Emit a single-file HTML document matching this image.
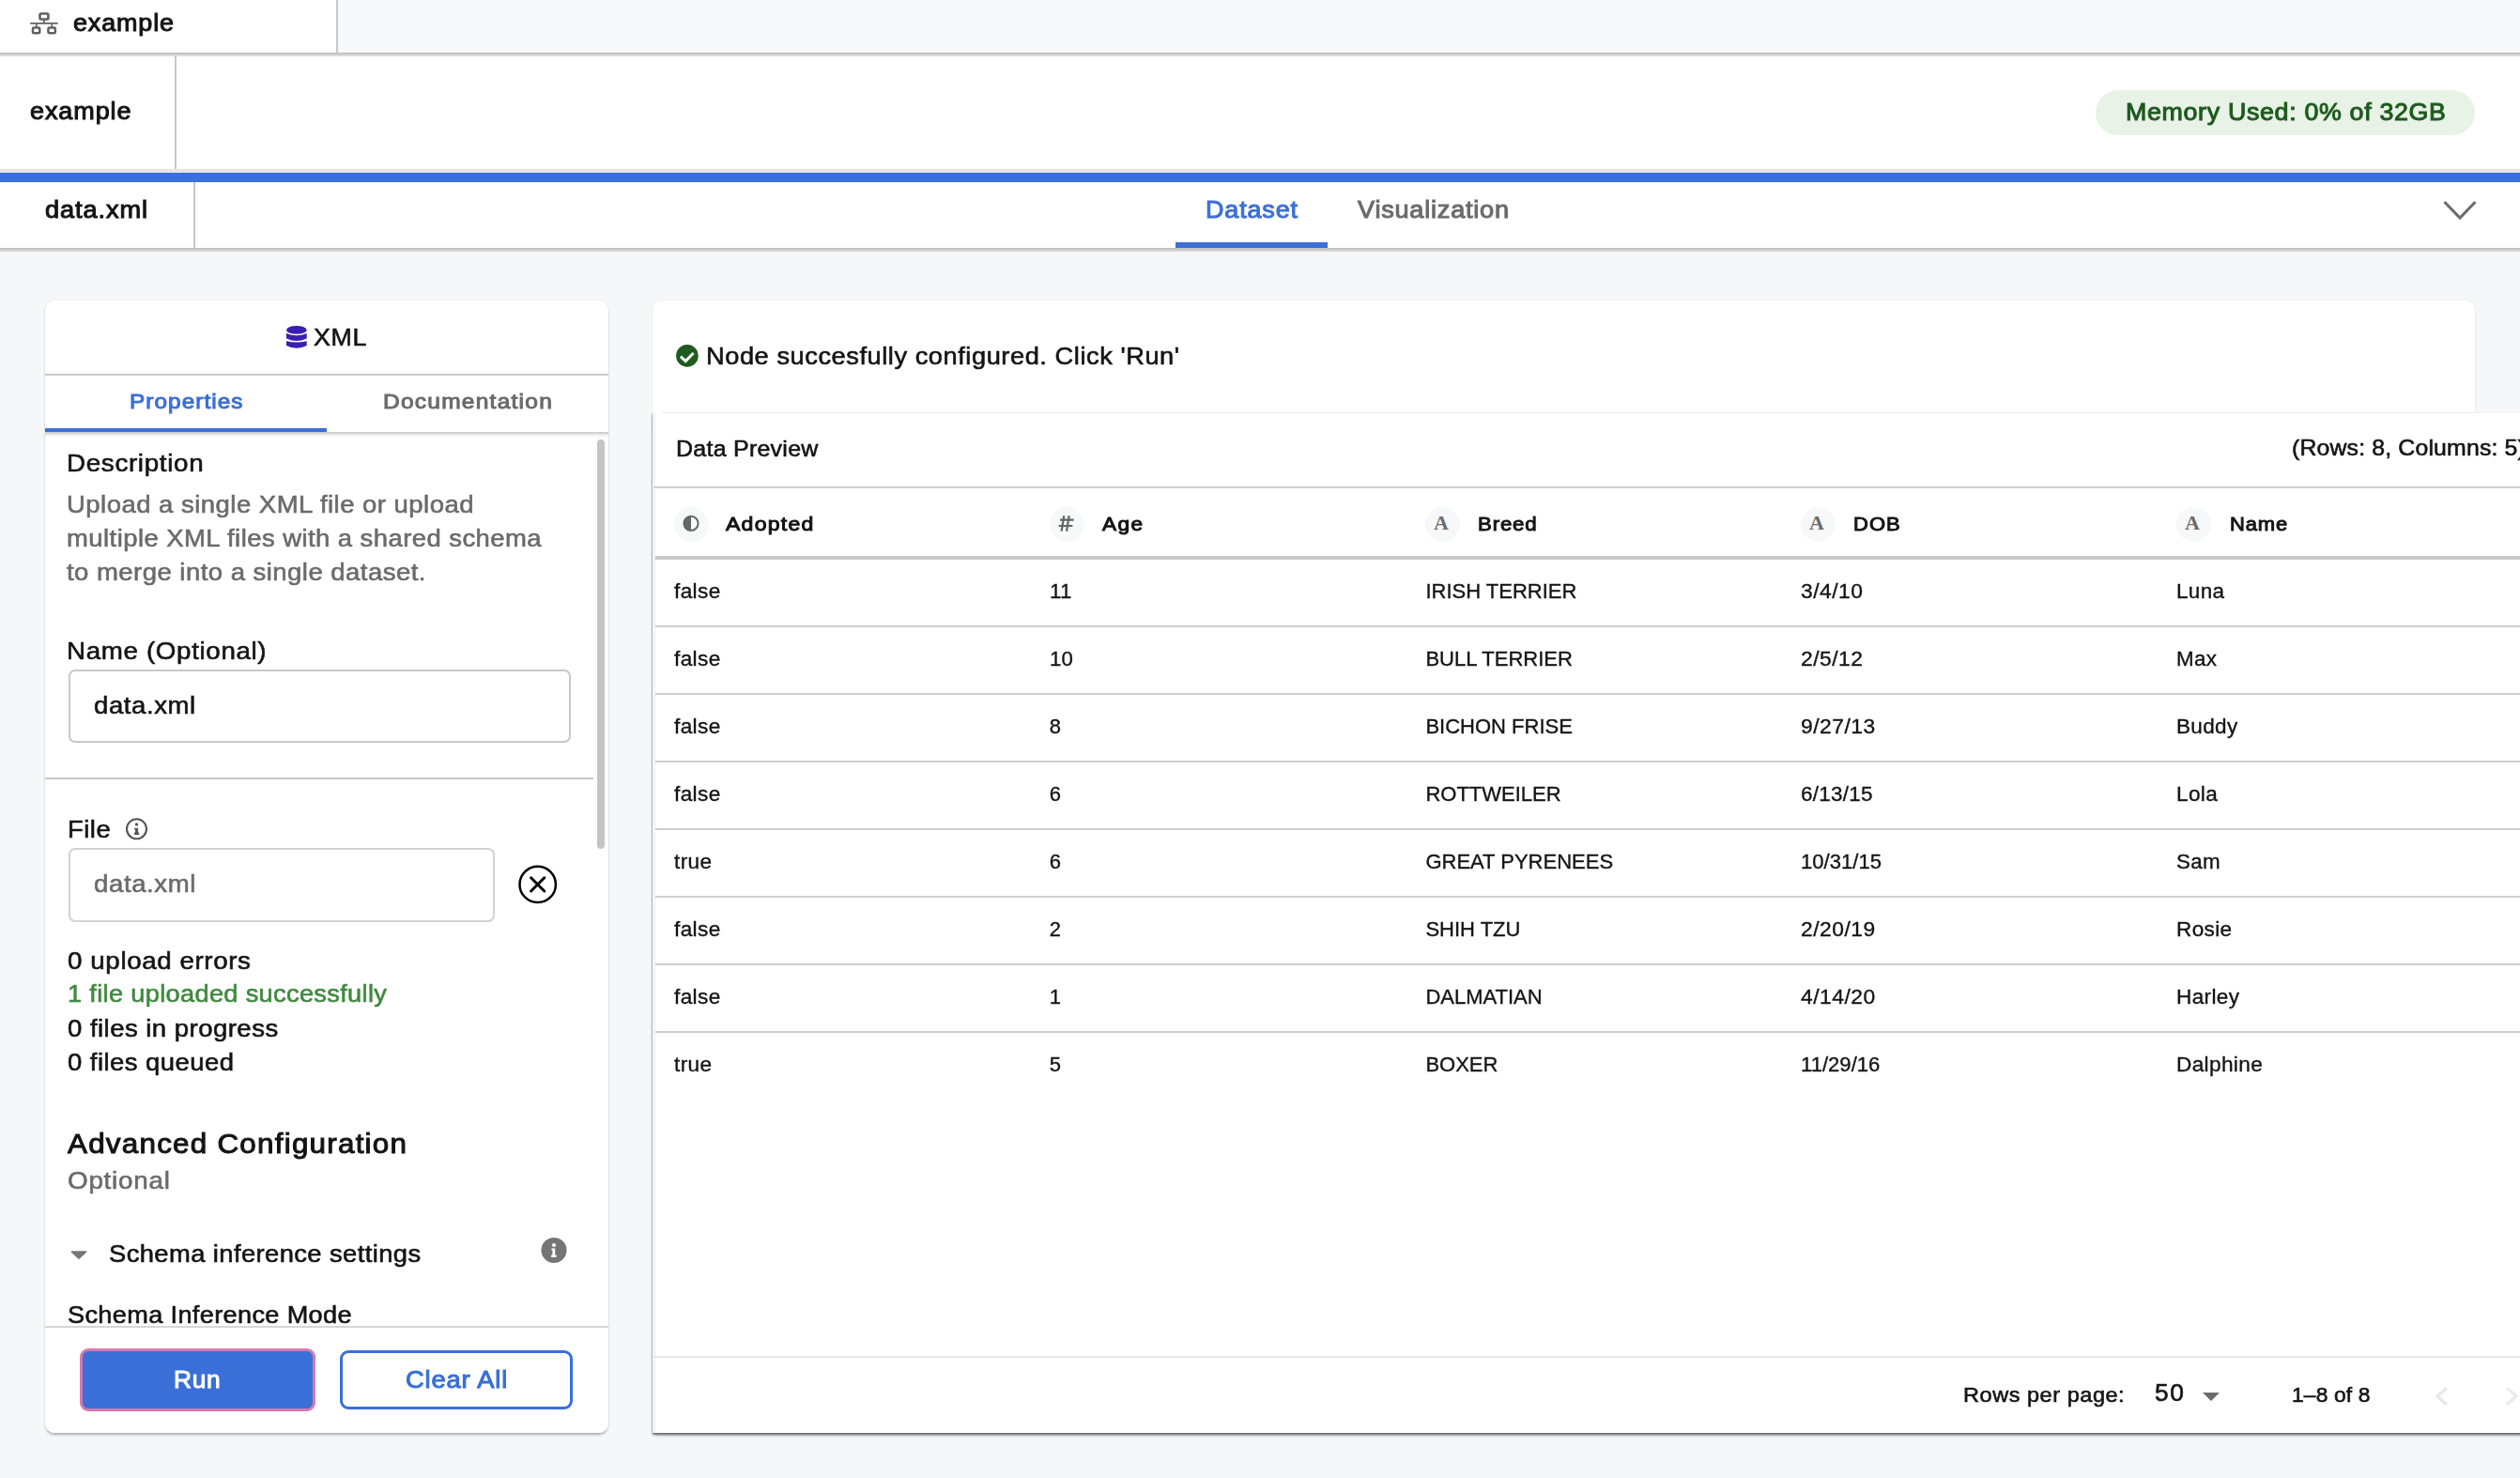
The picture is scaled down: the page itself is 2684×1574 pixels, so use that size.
<!DOCTYPE html>
<html><head><meta charset="utf-8">
<style>
html,body{margin:0;padding:0;}
body{width:2684px;height:1574px;position:relative;overflow:hidden;background:#f6f7f9;font-family:"Liberation Sans", sans-serif;}
.a{position:absolute;box-sizing:border-box;}
.t{position:absolute;white-space:pre;}
svg{position:absolute;overflow:visible;}
</style></head><body>
<!-- top bar -->
<div class="a" style="left:0;top:0;width:2684px;height:56px;background:#f7f8fa;"></div>
<div class="a" style="left:0;top:0;width:358px;height:56px;background:#fff;"></div>
<div class="a" style="left:358px;top:0;width:2px;height:56px;background:#c8c8c8;"></div>
<div class="a" style="left:0;top:56px;width:2684px;height:2px;background:#c2c2c2;"></div>
<div class="a" style="left:0;top:58px;width:2684px;height:2px;background:#dcdcdc;"></div>
<!-- row 2 -->
<div class="a" style="left:0;top:60px;width:2684px;height:120px;background:#fff;"></div>
<div class="a" style="left:186px;top:60px;width:2px;height:120px;background:#c8c8c8;"></div>
<div class="a" style="left:0;top:180px;width:2684px;height:4px;background:#e4e4e4;"></div>
<div class="a" style="left:2232px;top:96px;width:404px;height:48px;border-radius:24px;background:#e8f2e6;"></div>
<!-- blue bar -->
<div class="a" style="left:0;top:184px;width:2684px;height:10px;background:#3870dc;"></div>
<!-- row 3 -->
<div class="a" style="left:0;top:194px;width:2684px;height:70px;background:#fff;"></div>
<div class="a" style="left:206px;top:194px;width:2px;height:70px;background:#c8c8c8;"></div>
<div class="a" style="left:1252px;top:258px;width:162px;height:6px;background:#3b70d6;"></div>
<div class="a" style="left:0;top:264px;width:2684px;height:2px;background:#c2c2c2;"></div>
<div class="a" style="left:0;top:266px;width:2684px;height:2px;background:#d6d6d7;"></div>
<svg style="left:2600px;top:210px" width="40" height="28" viewBox="0 0 40 28"><path d="M3.5 5 L20 22 L36.5 5" fill="none" stroke="#6b6b6b" stroke-width="3"/></svg>
<!-- sitemap icon -->
<svg style="left:32px;top:13px" width="30" height="25" viewBox="0 0 30 25">
<rect x="10.5" y="1.5" width="8.9" height="6" fill="none" stroke="#616161" stroke-width="2.6" rx="1.2"/>
<rect x="14.1" y="8.6" width="1.8" height="2.8" fill="#616161"/>
<rect x="0" y="11.1" width="29.8" height="1.7" rx="0.8" fill="#616161"/>
<rect x="5.9" y="12.5" width="1.8" height="3" fill="#616161"/>
<rect x="22.4" y="12.5" width="1.6" height="3" fill="#616161"/>
<rect x="2.95" y="16.45" width="7.3" height="5.9" fill="none" stroke="#616161" stroke-width="2.5" rx="1.2"/>
<rect x="19.45" y="16.45" width="7.4" height="5.9" fill="none" stroke="#616161" stroke-width="2.5" rx="1.2"/>
</svg>

<!-- LEFT CARD -->
<div class="a" style="left:48px;top:320px;width:600px;height:1206px;background:#fff;border-radius:10px;box-shadow:0 3px 3px -1px rgba(0,0,0,0.3),0 0 2px rgba(0,0,0,0.12);"></div>
<svg style="left:305px;top:347px" width="22" height="25" viewBox="0 0 22 25">
<ellipse cx="10.85" cy="4.4" rx="10.85" ry="4.4" fill="#3a1fb0"/>
<path d="M0 8 Q10.85 12.6 21.7 8 L21.7 13.4 Q10.85 18.4 0 13.4 Z" fill="#3a1fb0"/>
<path d="M0 16.3 Q10.85 18.9 21.7 16.3 L21.7 20.9 Q10.85 26.7 0 20.9 Z" fill="#3a1fb0"/>
</svg>
<div class="a" style="left:48px;top:398px;width:600px;height:2px;background:#c8c8c8;"></div>
<div class="a" style="left:48px;top:456px;width:300px;height:4px;background:#3b70d6;"></div>
<div class="a" style="left:48px;top:460px;width:600px;height:2px;background:#d0d0d0;"></div>
<div class="a" style="left:48px;top:462px;width:600px;height:3px;background:linear-gradient(#e6e6e6,#fafafa);"></div>
<div class="a" style="left:636px;top:468px;width:8px;height:436px;border-radius:4px;background:#c4c4c4;"></div>
<div class="a" style="left:72.5px;top:713px;width:535px;height:78px;border:2px solid #c8c8c8;border-radius:7px;"></div>
<div class="a" style="left:48px;top:828px;width:584px;height:2px;background:#c8c8c8;"></div>
<svg style="left:133px;top:871px" width="26" height="24" viewBox="0 0 26 24">
<circle cx="12.5" cy="11.8" r="10.5" fill="none" stroke="#555" stroke-width="2.1"/>
<rect x="11" y="5.6" width="3.1" height="3" rx="0.8" fill="#555"/>
<path d="M10.2 10.8 H14.1 V15.6 H15.2 V17.9 H10 V15.6 H11.1 V12.6 H10.2 Z" fill="#555"/>
</svg>
<div class="a" style="left:73px;top:903px;width:454px;height:78.5px;border:2px solid #d2d2d2;border-radius:7px;"></div>
<svg style="left:551px;top:920px" width="44" height="44" viewBox="0 0 44 44">
<circle cx="21.7" cy="21.9" r="19.2" fill="none" stroke="#000" stroke-width="2.5"/>
<path d="M14.6 14.8 L28.8 29 M28.8 14.8 L14.6 29" stroke="#000" stroke-width="3" stroke-linecap="round"/>
</svg>
<svg style="left:74px;top:1330px" width="20" height="13" viewBox="0 0 20 13"><path d="M2.2 2.2 H17.8 Q19 2.4 18.2 3.4 L10.8 10.6 Q10 11.3 9.2 10.6 L1.8 3.4 Q1 2.4 2.2 2.2 Z" fill="#777"/></svg>
<svg style="left:576px;top:1317px" width="28" height="28" viewBox="0 0 28 28">
<circle cx="14" cy="14.4" r="13.5" fill="#757575"/>
<circle cx="14" cy="9" r="2.1" fill="#fff"/>
<path d="M11.4 12.4 H15.2 V19.6 H16.6 V22 H11 V19.6 H12.4 V14.2 H11.4 Z" fill="#fff"/>
</svg>
<div class="a" style="left:48px;top:1412px;width:600px;height:114px;background:#fff;border-radius:0 0 10px 10px;"></div>
<div class="a" style="left:48px;top:1412px;width:600px;height:2px;background:#d6d6d6;"></div>
<div class="a" style="left:84.5px;top:1436.4px;width:251px;height:67px;background:#3a6fd8;border:3px solid #d77aae;border-radius:9px;"></div>
<div class="a" style="left:362px;top:1438.4px;width:247.6px;height:63px;background:#fff;border:3.5px solid #3a6fd8;border-radius:9px;"></div>

<!-- RIGHT CARD -->
<div class="a" style="left:695px;top:320px;width:1941px;height:140px;background:#fff;border-radius:10px 10px 0 0;box-shadow:0 0 2px rgba(0,0,0,0.12);"></div>
<div class="a" style="left:695px;top:440px;width:2000px;height:1086px;background:#fff;box-shadow:0 2px 2px 0 rgba(0,0,0,0.45),0 4px 4px -2px rgba(0,0,0,0.3),-1.5px 0 1px rgba(0,0,0,0.28);"></div>
<div class="a" style="left:695px;top:320px;width:1941px;height:140px;background:#fff;border-radius:10px 10px 0 0;"></div>
<div class="a" style="left:704px;top:439px;width:1932px;height:1px;background:#f0f0f0;"></div>
<div class="a" style="left:696px;top:440px;width:2px;height:1086px;background:#eff0f0;"></div>
<svg style="left:720px;top:367px" width="24" height="24" viewBox="0 0 24 24">
<circle cx="11.9" cy="11.9" r="11.8" fill="#1f5a1f"/>
<path d="M4.9 12.6 L10.2 17.6 L18.6 8.9" fill="none" stroke="#fff" stroke-width="2.9"/>
</svg>
<div class="a" style="left:696px;top:518px;width:1988px;height:2px;background:#d0d0d0;"></div>
<div class="a" style="left:698px;top:592px;width:1986px;height:4px;background:#c8c8c8;"></div>
<div class="a" style="left:717.5px;top:539.5px;width:37px;height:37px;border-radius:50%;background:#f7f8f9;"></div>
<div class="a" style="left:1117.5px;top:539.5px;width:37px;height:37px;border-radius:50%;background:#f7f8f9;"></div>
<div class="a" style="left:1517.5px;top:539.5px;width:37px;height:37px;border-radius:50%;background:#f7f8f9;"></div>
<div class="a" style="left:1917.5px;top:539.5px;width:37px;height:37px;border-radius:50%;background:#f7f8f9;"></div>
<div class="a" style="left:2317.5px;top:539.5px;width:37px;height:37px;border-radius:50%;background:#f7f8f9;"></div>
<svg style="left:726px;top:548px" width="20" height="20" viewBox="0 0 20 20"><circle cx="10" cy="9.3" r="7.6" fill="none" stroke="#666" stroke-width="2"/><path d="M10 1.7 A7.6 7.6 0 0 0 10 16.9 Z" fill="#666"/></svg>
<svg style="left:1126px;top:548px" width="20" height="20" viewBox="0 0 20 20"><path d="M7.3 1.2 L4.6 17.7 M12.7 1.2 L10 17.7 M3 5.7 H17.6 M1.6 12 H16.4" fill="none" stroke="#666" stroke-width="2.2"/></svg>
<div class="t" style="left:1527px;top:546.377px;font-family:'Liberation Serif',serif;font-weight:700;font-size:22px;line-height:22px;color:#6b6b6b;">A</div>
<div class="t" style="left:1927px;top:546.377px;font-family:'Liberation Serif',serif;font-weight:700;font-size:22px;line-height:22px;color:#6b6b6b;">A</div>
<div class="t" style="left:2327px;top:546.377px;font-family:'Liberation Serif',serif;font-weight:700;font-size:22px;line-height:22px;color:#6b6b6b;">A</div>
<div class="a" style="left:698px;top:666px;width:1986px;height:2px;background:#cfcfcf;"></div>
<div class="a" style="left:698px;top:738px;width:1986px;height:2px;background:#cfcfcf;"></div>
<div class="a" style="left:698px;top:810px;width:1986px;height:2px;background:#cfcfcf;"></div>
<div class="a" style="left:698px;top:882px;width:1986px;height:2px;background:#cfcfcf;"></div>
<div class="a" style="left:698px;top:954px;width:1986px;height:2px;background:#cfcfcf;"></div>
<div class="a" style="left:698px;top:1026px;width:1986px;height:2px;background:#cfcfcf;"></div>
<div class="a" style="left:698px;top:1098px;width:1986px;height:2px;background:#cfcfcf;"></div>
<div class="a" style="left:696px;top:1444px;width:1988px;height:2px;background:#e6e6e6;"></div>
<svg style="left:2345px;top:1482px" width="20" height="11" viewBox="0 0 20 11"><path d="M1 1 H19 L10 10 Z" fill="#6b6b6b"/></svg>
<svg style="left:2590px;top:1475px" width="20" height="24" viewBox="0 0 20 24"><path d="M16 3 L6 12 L16 21" fill="none" stroke="#e8e8e8" stroke-width="3.4"/></svg>
<svg style="left:2664px;top:1475px" width="20" height="24" viewBox="0 0 20 24"><path d="M6 3 L16 12 L6 21" fill="none" stroke="#ebebeb" stroke-width="3.4"/></svg>
<div class="a" style="left:0;top:0;width:2684px;height:1574px;will-change:transform;">
<div class="t" style="left:78.0px;top:12.4px;font-size:25.5px;line-height:25.5px;font-weight:400;color:#141414;letter-spacing:0.84px;transform:scaleX(1.0552);transform-origin:0 0;-webkit-text-stroke:1.0px currentColor;">example</div>
<div class="t" style="left:31.5px;top:106.4px;font-size:25.5px;line-height:25.5px;font-weight:400;color:#141414;letter-spacing:0.88px;transform:scaleX(1.0578);transform-origin:0 0;-webkit-text-stroke:1.0px currentColor;">example</div>
<div class="t" style="left:2264.0px;top:106.7px;font-size:25.5px;line-height:25.5px;font-weight:400;color:#1e5a1e;letter-spacing:0.66px;transform:scaleX(1.0494);transform-origin:0 0;-webkit-text-stroke:1.0px currentColor;">Memory Used: 0% of 32GB</div>
<div class="t" style="left:48.0px;top:210.5px;font-size:25.5px;line-height:25.5px;font-weight:400;color:#141414;letter-spacing:0.85px;transform:scaleX(1.0657);transform-origin:0 0;-webkit-text-stroke:1.0px currentColor;">data.xml</div>
<div class="t" style="left:1284.0px;top:211.0px;font-size:25.5px;line-height:25.5px;font-weight:400;color:#3b70d6;letter-spacing:0.80px;transform:scaleX(1.0577);transform-origin:0 0;-webkit-text-stroke:1.0px currentColor;">Dataset</div>
<div class="t" style="left:1446.0px;top:211.0px;font-size:25.5px;line-height:25.5px;font-weight:400;color:#6b6b6b;letter-spacing:0.72px;transform:scaleX(1.0642);transform-origin:0 0;-webkit-text-stroke:1.0px currentColor;">Visualization</div>
<div class="t" style="left:334.1px;top:345.8px;font-size:26.3px;line-height:26.3px;font-weight:400;color:#141414;letter-spacing:0.55px;transform:scaleX(1.0206);transform-origin:0 0;-webkit-text-stroke:0.6px currentColor;">XML</div>
<div class="t" style="left:137.9px;top:417.1px;font-size:22.3px;line-height:22.3px;font-weight:400;color:#3b70d6;letter-spacing:0.96px;transform:scaleX(1.0928);transform-origin:0 0;-webkit-text-stroke:1.0px currentColor;">Properties</div>
<div class="t" style="left:408.1px;top:417.1px;font-size:22.3px;line-height:22.3px;font-weight:400;color:#6b6b6b;letter-spacing:1.13px;transform:scaleX(1.0993);transform-origin:0 0;-webkit-text-stroke:1.0px currentColor;">Documentation</div>
<div class="t" style="left:71.4px;top:480.4px;font-size:26.5px;line-height:26.5px;font-weight:400;color:#141414;letter-spacing:0.62px;transform:scaleX(1.0493);transform-origin:0 0;-webkit-text-stroke:0.6px currentColor;">Description</div>
<div class="t" style="left:71.4px;top:523.6px;font-size:26.5px;line-height:26.5px;font-weight:400;color:#6b6b6b;letter-spacing:0.45px;transform:scaleX(1.0384);transform-origin:0 0;-webkit-text-stroke:0.6px currentColor;">Upload a single XML file or upload</div>
<div class="t" style="left:71.4px;top:559.6px;font-size:26.5px;line-height:26.5px;font-weight:400;color:#6b6b6b;letter-spacing:0.43px;transform:scaleX(1.0358);transform-origin:0 0;-webkit-text-stroke:0.6px currentColor;">multiple XML files with a shared schema</div>
<div class="t" style="left:71.4px;top:595.6px;font-size:26.5px;line-height:26.5px;font-weight:400;color:#6b6b6b;letter-spacing:0.44px;transform:scaleX(1.0386);transform-origin:0 0;-webkit-text-stroke:0.6px currentColor;">to merge into a single dataset.</div>
<div class="t" style="left:71.4px;top:679.6px;font-size:26.5px;line-height:26.5px;font-weight:400;color:#141414;letter-spacing:0.62px;transform:scaleX(1.0468);transform-origin:0 0;-webkit-text-stroke:0.6px currentColor;">Name (Optional)</div>
<div class="t" style="left:99.9px;top:737.6px;font-size:26.5px;line-height:26.5px;font-weight:400;color:#141414;letter-spacing:0.55px;transform:scaleX(1.0398);transform-origin:0 0;-webkit-text-stroke:0.6px currentColor;">data.xml</div>
<div class="t" style="left:72.1px;top:869.6px;font-size:26.5px;line-height:26.5px;font-weight:400;color:#141414;letter-spacing:0.47px;transform:scaleX(1.0342);transform-origin:0 0;-webkit-text-stroke:0.6px currentColor;">File</div>
<div class="t" style="left:99.9px;top:927.6px;font-size:26.5px;line-height:26.5px;font-weight:400;color:#6b6b6b;letter-spacing:0.57px;transform:scaleX(1.0413);transform-origin:0 0;-webkit-text-stroke:0.6px currentColor;">data.xml</div>
<div class="t" style="left:72.1px;top:1009.6px;font-size:26.5px;line-height:26.5px;font-weight:400;color:#141414;letter-spacing:0.57px;transform:scaleX(1.0468);transform-origin:0 0;-webkit-text-stroke:0.6px currentColor;">0 upload errors</div>
<div class="t" style="left:72.1px;top:1045.1px;font-size:26.5px;line-height:26.5px;font-weight:400;color:#3e8a3e;letter-spacing:0.31px;transform:scaleX(1.0268);transform-origin:0 0;-webkit-text-stroke:0.6px currentColor;">1 file uploaded successfully</div>
<div class="t" style="left:72.1px;top:1082.1px;font-size:26.5px;line-height:26.5px;font-weight:400;color:#141414;letter-spacing:0.44px;transform:scaleX(1.0397);transform-origin:0 0;-webkit-text-stroke:0.6px currentColor;">0 files in progress</div>
<div class="t" style="left:72.1px;top:1117.6px;font-size:26.5px;line-height:26.5px;font-weight:400;color:#141414;letter-spacing:0.44px;transform:scaleX(1.0361);transform-origin:0 0;-webkit-text-stroke:0.6px currentColor;">0 files queued</div>
<div class="t" style="left:71.8px;top:1203.5px;font-size:29px;line-height:29px;font-weight:400;color:#141414;letter-spacing:1.13px;transform:scaleX(1.0831);transform-origin:0 0;-webkit-text-stroke:1.0px currentColor;">Advanced Configuration</div>
<div class="t" style="left:71.9px;top:1243.6px;font-size:26.5px;line-height:26.5px;font-weight:400;color:#6b6b6b;letter-spacing:0.69px;transform:scaleX(1.0512);transform-origin:0 0;-webkit-text-stroke:0.6px currentColor;">Optional</div>
<div class="t" style="left:115.9px;top:1322.1px;font-size:26.5px;line-height:26.5px;font-weight:400;color:#141414;letter-spacing:0.40px;transform:scaleX(1.0318);transform-origin:0 0;-webkit-text-stroke:0.6px currentColor;">Schema inference settings</div>
<div class="t" style="left:71.9px;top:1387.3px;font-size:26.5px;line-height:26.5px;font-weight:400;color:#141414;letter-spacing:0.34px;transform:scaleX(1.0239);transform-origin:0 0;-webkit-text-stroke:0.6px currentColor;">Schema Inference Mode</div>
<div class="t" style="left:185.0px;top:1456.9px;font-size:25.5px;line-height:25.5px;font-weight:400;color:#ffffff;letter-spacing:0.72px;transform:scaleX(1.0316);transform-origin:0 0;-webkit-text-stroke:1.0px currentColor;">Run</div>
<div class="t" style="left:432.0px;top:1456.9px;font-size:25.5px;line-height:25.5px;font-weight:400;color:#3a6fd8;letter-spacing:0.78px;transform:scaleX(1.0705);transform-origin:0 0;-webkit-text-stroke:1.0px currentColor;">Clear All</div>
<div class="t" style="left:751.6px;top:365.9px;font-size:26px;line-height:26px;font-weight:400;color:#141414;letter-spacing:0.53px;transform:scaleX(1.0467);transform-origin:0 0;-webkit-text-stroke:0.6px currentColor;">Node succesfully configured. Click 'Run'</div>
<div class="t" style="left:720.3px;top:465.5px;font-size:24.5px;line-height:24.5px;font-weight:400;color:#141414;letter-spacing:0.25px;transform:scaleX(1.0194);transform-origin:0 0;-webkit-text-stroke:0.6px currentColor;">Data Preview</div>
<div class="t" style="left:2440.6px;top:464.5px;font-size:24.5px;line-height:24.5px;font-weight:400;color:#141414;letter-spacing:0.16px;transform:scaleX(1.0134);transform-origin:0 0;-webkit-text-stroke:0.6px currentColor;">(Rows: 8, Columns: 5)</div>
<div class="t" style="left:773.4px;top:546.5px;font-size:21px;line-height:21px;font-weight:400;color:#141414;letter-spacing:1.15px;transform:scaleX(1.0967);transform-origin:0 0;-webkit-text-stroke:1.0px currentColor;">Adopted</div>
<div class="t" style="left:1173.6px;top:546.5px;font-size:21px;line-height:21px;font-weight:400;color:#141414;letter-spacing:1.33px;transform:scaleX(1.0763);transform-origin:0 0;-webkit-text-stroke:1.0px currentColor;">Age</div>
<div class="t" style="left:1574.2px;top:546.5px;font-size:21px;line-height:21px;font-weight:400;color:#141414;letter-spacing:0.78px;transform:scaleX(1.0592);transform-origin:0 0;-webkit-text-stroke:1.0px currentColor;">Breed</div>
<div class="t" style="left:1974.0px;top:546.5px;font-size:21px;line-height:21px;font-weight:400;color:#141414;letter-spacing:1.02px;transform:scaleX(1.0468);transform-origin:0 0;-webkit-text-stroke:1.0px currentColor;">DOB</div>
<div class="t" style="left:2374.5px;top:546.5px;font-size:21px;line-height:21px;font-weight:400;color:#141414;letter-spacing:0.81px;transform:scaleX(1.0451);transform-origin:0 0;-webkit-text-stroke:1.0px currentColor;">Name</div>
<div class="t" style="left:718.1px;top:619.4px;font-size:22px;line-height:22px;font-weight:400;color:#141414;letter-spacing:0.34px;transform:scaleX(1.0301);transform-origin:0 0;-webkit-text-stroke:0.35px currentColor;">false</div>
<div class="t" style="left:1117.7px;top:619.4px;font-size:22px;line-height:22px;font-weight:400;color:#141414;letter-spacing:0.25px;transform:scaleX(1.0109);transform-origin:0 0;-webkit-text-stroke:0.35px currentColor;">11</div>
<div class="t" style="left:1518.4px;top:619.4px;font-size:22px;line-height:22px;font-weight:400;color:#141414;letter-spacing:0.00px;transform:scaleX(1.0000);transform-origin:0 0;-webkit-text-stroke:0.35px currentColor;">IRISH TERRIER</div>
<div class="t" style="left:1917.9px;top:619.4px;font-size:22px;line-height:22px;font-weight:400;color:#141414;letter-spacing:0.46px;transform:scaleX(1.0388);transform-origin:0 0;-webkit-text-stroke:0.35px currentColor;">3/4/10</div>
<div class="t" style="left:2318.3px;top:619.4px;font-size:22px;line-height:22px;font-weight:400;color:#141414;letter-spacing:0.34px;transform:scaleX(1.0214);transform-origin:0 0;-webkit-text-stroke:0.35px currentColor;">Luna</div>
<div class="t" style="left:718.1px;top:691.4px;font-size:22px;line-height:22px;font-weight:400;color:#141414;letter-spacing:0.34px;transform:scaleX(1.0301);transform-origin:0 0;-webkit-text-stroke:0.35px currentColor;">false</div>
<div class="t" style="left:1117.7px;top:691.4px;font-size:22px;line-height:22px;font-weight:400;color:#141414;letter-spacing:0.25px;transform:scaleX(1.0102);transform-origin:0 0;-webkit-text-stroke:0.35px currentColor;">10</div>
<div class="t" style="left:1518.4px;top:691.4px;font-size:22px;line-height:22px;font-weight:400;color:#141414;letter-spacing:0.00px;transform:scaleX(1.0000);transform-origin:0 0;-webkit-text-stroke:0.35px currentColor;">BULL TERRIER</div>
<div class="t" style="left:1917.9px;top:691.4px;font-size:22px;line-height:22px;font-weight:400;color:#141414;letter-spacing:0.46px;transform:scaleX(1.0388);transform-origin:0 0;-webkit-text-stroke:0.35px currentColor;">2/5/12</div>
<div class="t" style="left:2318.3px;top:691.4px;font-size:22px;line-height:22px;font-weight:400;color:#141414;letter-spacing:0.34px;transform:scaleX(1.0168);transform-origin:0 0;-webkit-text-stroke:0.35px currentColor;">Max</div>
<div class="t" style="left:718.1px;top:763.4px;font-size:22px;line-height:22px;font-weight:400;color:#141414;letter-spacing:0.34px;transform:scaleX(1.0301);transform-origin:0 0;-webkit-text-stroke:0.35px currentColor;">false</div>
<div class="t" style="left:1117.7px;top:763.4px;font-size:22px;line-height:22px;font-weight:400;color:#141414;letter-spacing:0.00px;transform:scaleX(1.0000);transform-origin:0 0;-webkit-text-stroke:0.35px currentColor;">8</div>
<div class="t" style="left:1518.4px;top:763.4px;font-size:22px;line-height:22px;font-weight:400;color:#141414;letter-spacing:0.00px;transform:scaleX(1.0000);transform-origin:0 0;-webkit-text-stroke:0.35px currentColor;">BICHON FRISE</div>
<div class="t" style="left:1917.9px;top:763.4px;font-size:22px;line-height:22px;font-weight:400;color:#141414;letter-spacing:0.46px;transform:scaleX(1.0388);transform-origin:0 0;-webkit-text-stroke:0.35px currentColor;">9/27/13</div>
<div class="t" style="left:2318.3px;top:763.4px;font-size:22px;line-height:22px;font-weight:400;color:#141414;letter-spacing:0.34px;transform:scaleX(1.0224);transform-origin:0 0;-webkit-text-stroke:0.35px currentColor;">Buddy</div>
<div class="t" style="left:718.1px;top:835.4px;font-size:22px;line-height:22px;font-weight:400;color:#141414;letter-spacing:0.34px;transform:scaleX(1.0301);transform-origin:0 0;-webkit-text-stroke:0.35px currentColor;">false</div>
<div class="t" style="left:1117.7px;top:835.4px;font-size:22px;line-height:22px;font-weight:400;color:#141414;letter-spacing:0.00px;transform:scaleX(1.0000);transform-origin:0 0;-webkit-text-stroke:0.35px currentColor;">6</div>
<div class="t" style="left:1518.4px;top:835.4px;font-size:22px;line-height:22px;font-weight:400;color:#141414;letter-spacing:0.00px;transform:scaleX(1.0000);transform-origin:0 0;-webkit-text-stroke:0.35px currentColor;">ROTTWEILER</div>
<div class="t" style="left:1917.9px;top:835.4px;font-size:22px;line-height:22px;font-weight:400;color:#141414;letter-spacing:0.24px;transform:scaleX(1.0204);transform-origin:0 0;-webkit-text-stroke:0.35px currentColor;">6/13/15</div>
<div class="t" style="left:2318.3px;top:835.4px;font-size:22px;line-height:22px;font-weight:400;color:#141414;letter-spacing:0.34px;transform:scaleX(1.0252);transform-origin:0 0;-webkit-text-stroke:0.35px currentColor;">Lola</div>
<div class="t" style="left:718.1px;top:907.4px;font-size:22px;line-height:22px;font-weight:400;color:#141414;letter-spacing:0.34px;transform:scaleX(1.0277);transform-origin:0 0;-webkit-text-stroke:0.35px currentColor;">true</div>
<div class="t" style="left:1117.7px;top:907.4px;font-size:22px;line-height:22px;font-weight:400;color:#141414;letter-spacing:0.00px;transform:scaleX(1.0000);transform-origin:0 0;-webkit-text-stroke:0.35px currentColor;">6</div>
<div class="t" style="left:1518.4px;top:907.4px;font-size:22px;line-height:22px;font-weight:400;color:#141414;letter-spacing:0.00px;transform:scaleX(1.0000);transform-origin:0 0;-webkit-text-stroke:0.35px currentColor;">GREAT PYRENEES</div>
<div class="t" style="left:1917.9px;top:907.4px;font-size:22px;line-height:22px;font-weight:400;color:#141414;letter-spacing:0.02px;transform:scaleX(1.0020);transform-origin:0 0;-webkit-text-stroke:0.35px currentColor;">10/31/15</div>
<div class="t" style="left:2318.3px;top:907.4px;font-size:22px;line-height:22px;font-weight:400;color:#141414;letter-spacing:0.34px;transform:scaleX(1.0155);transform-origin:0 0;-webkit-text-stroke:0.35px currentColor;">Sam</div>
<div class="t" style="left:718.1px;top:979.4px;font-size:22px;line-height:22px;font-weight:400;color:#141414;letter-spacing:0.34px;transform:scaleX(1.0301);transform-origin:0 0;-webkit-text-stroke:0.35px currentColor;">false</div>
<div class="t" style="left:1117.7px;top:979.4px;font-size:22px;line-height:22px;font-weight:400;color:#141414;letter-spacing:0.00px;transform:scaleX(1.0000);transform-origin:0 0;-webkit-text-stroke:0.35px currentColor;">2</div>
<div class="t" style="left:1518.4px;top:979.4px;font-size:22px;line-height:22px;font-weight:400;color:#141414;letter-spacing:0.00px;transform:scaleX(1.0000);transform-origin:0 0;-webkit-text-stroke:0.35px currentColor;">SHIH TZU</div>
<div class="t" style="left:1917.9px;top:979.4px;font-size:22px;line-height:22px;font-weight:400;color:#141414;letter-spacing:0.46px;transform:scaleX(1.0388);transform-origin:0 0;-webkit-text-stroke:0.35px currentColor;">2/20/19</div>
<div class="t" style="left:2318.3px;top:979.4px;font-size:22px;line-height:22px;font-weight:400;color:#141414;letter-spacing:0.34px;transform:scaleX(1.0249);transform-origin:0 0;-webkit-text-stroke:0.35px currentColor;">Rosie</div>
<div class="t" style="left:718.1px;top:1051.4px;font-size:22px;line-height:22px;font-weight:400;color:#141414;letter-spacing:0.34px;transform:scaleX(1.0301);transform-origin:0 0;-webkit-text-stroke:0.35px currentColor;">false</div>
<div class="t" style="left:1117.7px;top:1051.4px;font-size:22px;line-height:22px;font-weight:400;color:#141414;letter-spacing:0.00px;transform:scaleX(1.0000);transform-origin:0 0;-webkit-text-stroke:0.35px currentColor;">1</div>
<div class="t" style="left:1518.4px;top:1051.4px;font-size:22px;line-height:22px;font-weight:400;color:#141414;letter-spacing:0.00px;transform:scaleX(1.0000);transform-origin:0 0;-webkit-text-stroke:0.35px currentColor;">DALMATIAN</div>
<div class="t" style="left:1917.9px;top:1051.4px;font-size:22px;line-height:22px;font-weight:400;color:#141414;letter-spacing:0.46px;transform:scaleX(1.0388);transform-origin:0 0;-webkit-text-stroke:0.35px currentColor;">4/14/20</div>
<div class="t" style="left:2318.3px;top:1051.4px;font-size:22px;line-height:22px;font-weight:400;color:#141414;letter-spacing:0.34px;transform:scaleX(1.0275);transform-origin:0 0;-webkit-text-stroke:0.35px currentColor;">Harley</div>
<div class="t" style="left:718.1px;top:1123.4px;font-size:22px;line-height:22px;font-weight:400;color:#141414;letter-spacing:0.34px;transform:scaleX(1.0277);transform-origin:0 0;-webkit-text-stroke:0.35px currentColor;">true</div>
<div class="t" style="left:1117.7px;top:1123.4px;font-size:22px;line-height:22px;font-weight:400;color:#141414;letter-spacing:0.00px;transform:scaleX(1.0000);transform-origin:0 0;-webkit-text-stroke:0.35px currentColor;">5</div>
<div class="t" style="left:1518.4px;top:1123.4px;font-size:22px;line-height:22px;font-weight:400;color:#141414;letter-spacing:0.00px;transform:scaleX(1.0000);transform-origin:0 0;-webkit-text-stroke:0.35px currentColor;">BOXER</div>
<div class="t" style="left:1917.9px;top:1123.4px;font-size:22px;line-height:22px;font-weight:400;color:#141414;letter-spacing:0.02px;transform:scaleX(1.0021);transform-origin:0 0;-webkit-text-stroke:0.35px currentColor;">11/29/16</div>
<div class="t" style="left:2318.3px;top:1123.4px;font-size:22px;line-height:22px;font-weight:400;color:#141414;letter-spacing:0.34px;transform:scaleX(1.0282);transform-origin:0 0;-webkit-text-stroke:0.35px currentColor;">Dalphine</div>
<div class="t" style="left:2091.1px;top:1474.8px;font-size:22.5px;line-height:22.5px;font-weight:400;color:#141414;letter-spacing:0.52px;transform:scaleX(1.0444);transform-origin:0 0;-webkit-text-stroke:0.6px currentColor;">Rows per page:</div>
<div class="t" style="left:2294.8px;top:1470.6px;font-size:25px;line-height:25px;font-weight:400;color:#141414;letter-spacing:1.42px;transform:scaleX(1.0539);transform-origin:0 0;-webkit-text-stroke:0.6px currentColor;">50</div>
<div class="t" style="left:2440.5px;top:1474.8px;font-size:22.5px;line-height:22.5px;font-weight:400;color:#141414;letter-spacing:0.15px;transform:scaleX(1.0127);transform-origin:0 0;-webkit-text-stroke:0.6px currentColor;">1–8 of 8</div>
</div>
</body></html>
